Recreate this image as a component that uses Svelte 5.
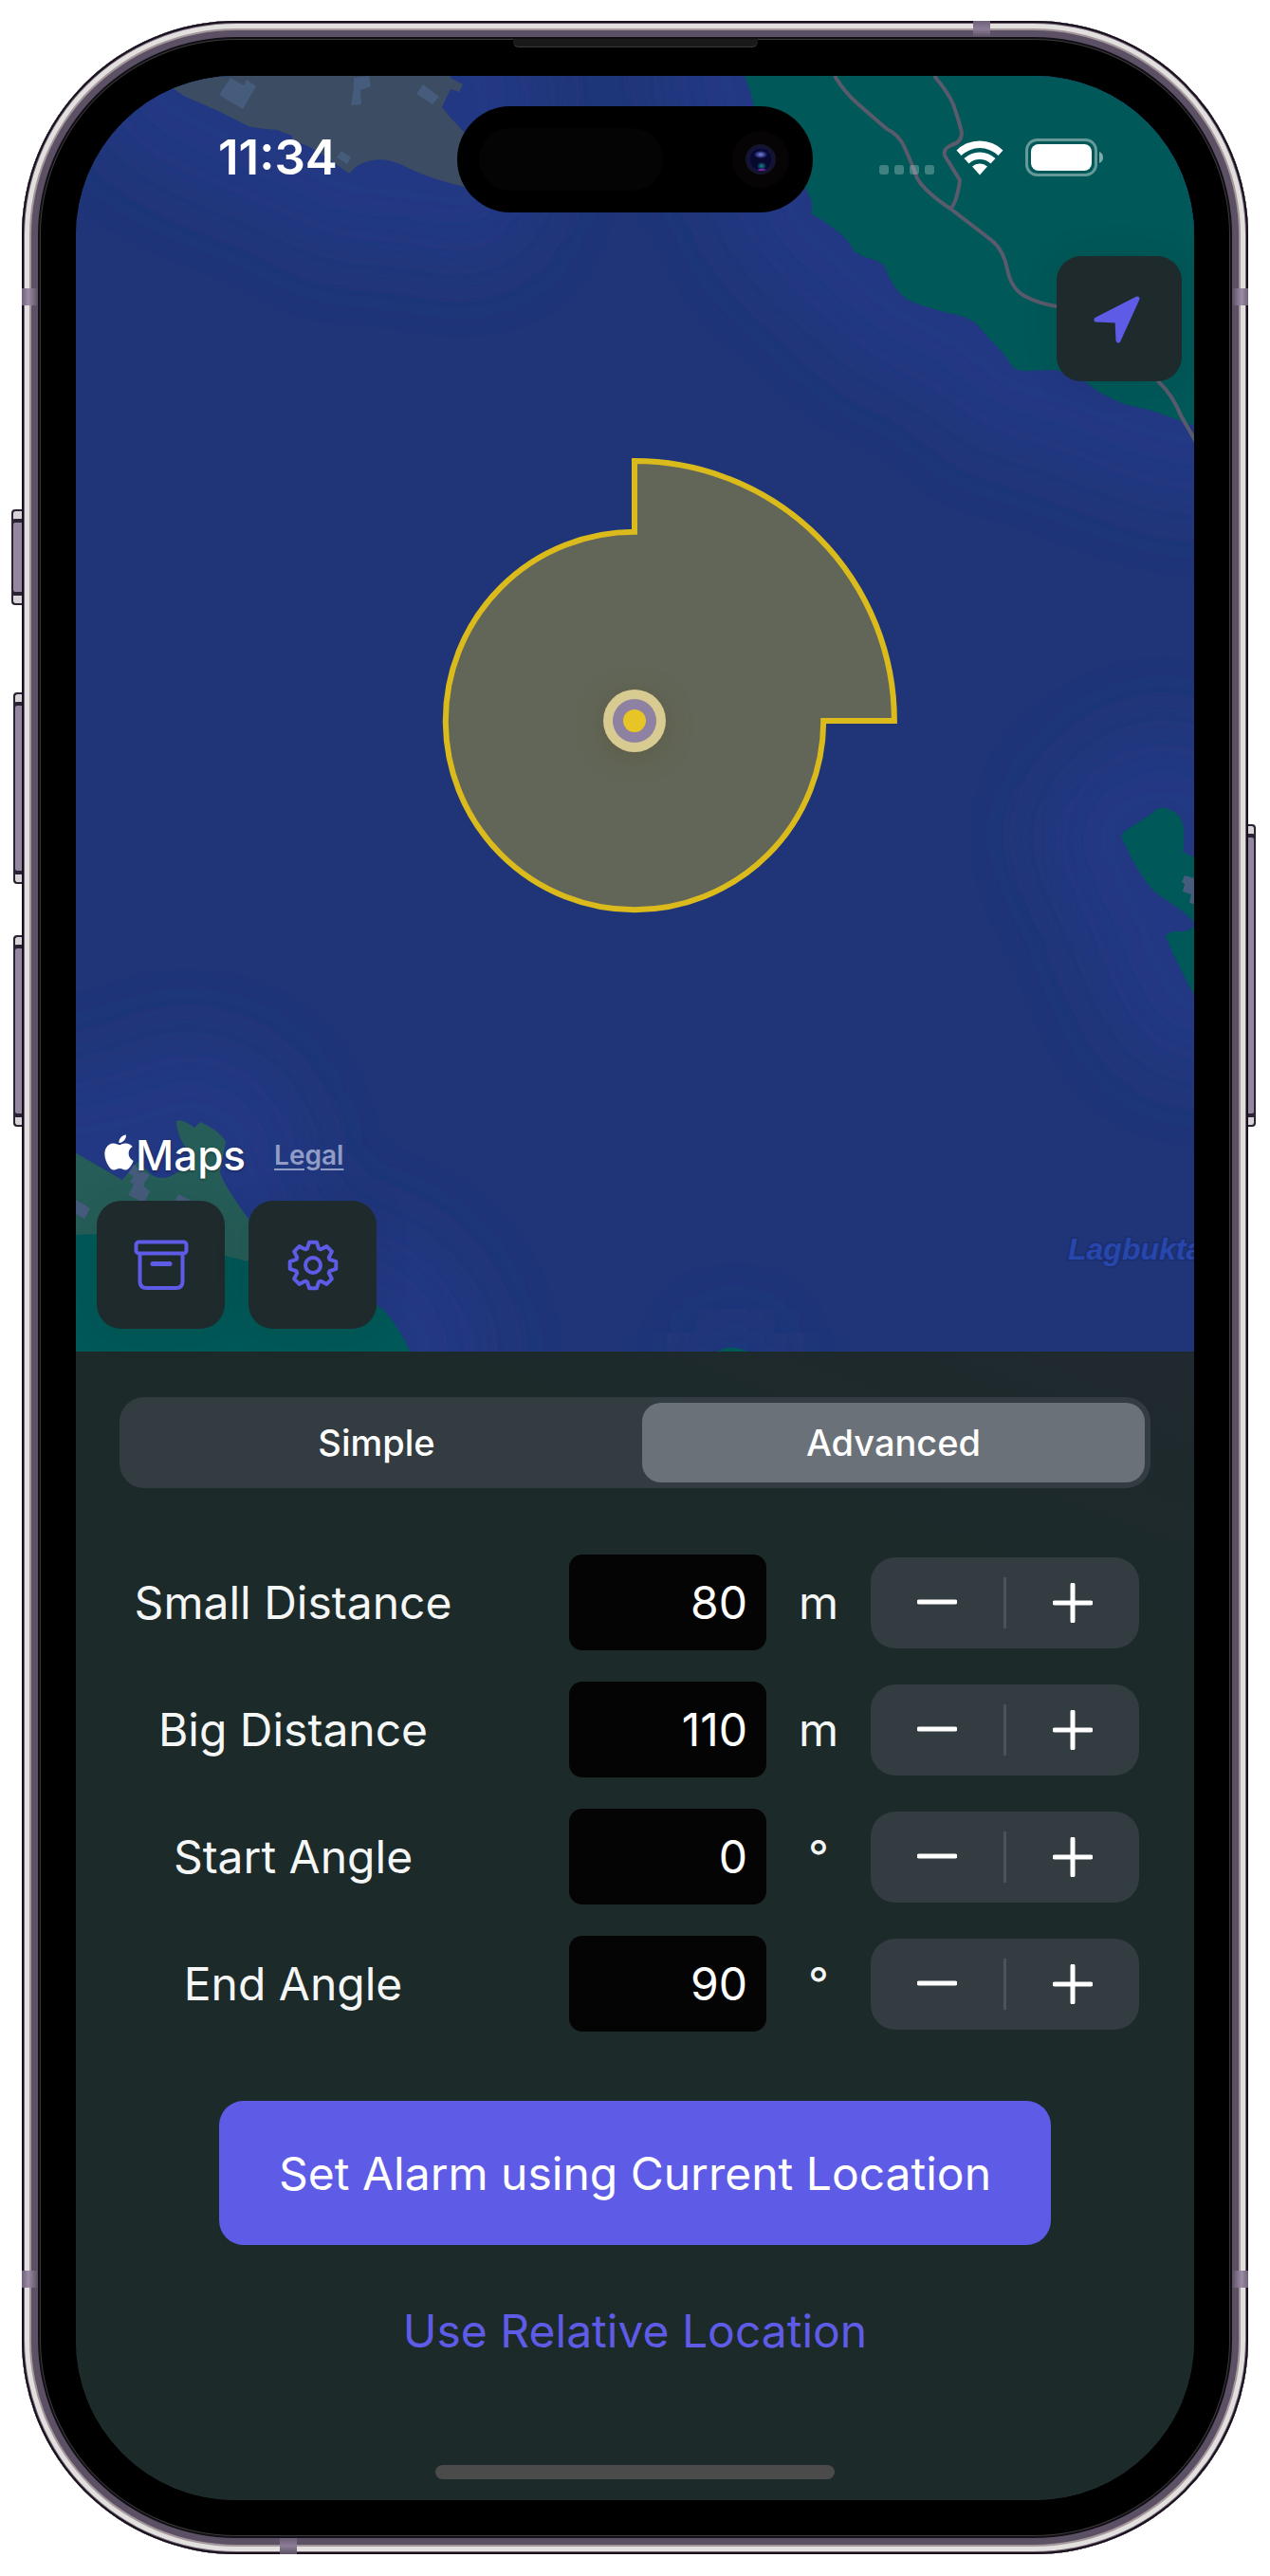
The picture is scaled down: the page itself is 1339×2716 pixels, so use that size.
<script>
  let mode = $state('Advanced');
  let rows = $state([
    { id: 'small', label: 'Small Distance', value: 80, unit: 'm', step: 10 },
    { id: 'big', label: 'Big Distance', value: 110, unit: 'm', step: 10 },
    { id: 'start', label: 'Start Angle', value: 0, unit: '°', step: 5 },
    { id: 'end', label: 'End Angle', value: 90, unit: '°', step: 5 }
  ]);

  // Anchor position on the map and the scale in map units per metre.
  const cx = 669;
  const cy = 760;
  const scale = 2.49;

  function point(radius, degrees) {
    const a = (degrees * Math.PI) / 180;
    return `${(cx + radius * Math.sin(a)).toFixed(1)} ${(cy - radius * Math.cos(a)).toFixed(1)}`;
  }

  // Outer arc from the start to the end angle, then the inner arc back round.
  let zone = $derived.by(() => {
    const small = Number(rows[0].value) * scale;
    const big = Number(rows[1].value) * scale;
    const start = Number(rows[2].value);
    const end = Number(rows[3].value);
    const large = end - start > 180 ? 1 : 0;
    return (
      `M${point(big, start)} A${big} ${big} 0 ${large} 1 ${point(big, end)} ` +
      `L${point(small, end)} A${small} ${small} 0 ${1 - large} 1 ${point(small, start)} Z`
    );
  });

  const gear = Array.from({ length: 8 }, (_, i) =>
    [[-19, 18.6], [-9, 24.6], [9, 24.6], [19, 18.6]]
      .map(([d, r]) => {
        const a = ((i * 45 + d) * Math.PI) / 180;
        return `${(28 + r * Math.sin(a)).toFixed(2)} ${(28 - r * Math.cos(a)).toFixed(2)}`;
      })
      .join('L')
  ).join('L');

  const greyLand =
    'M170 70L184 94Q192 101 205 106L232 118L262 133Q268 135 292 137L308 143V148L325 154L345 166L368 183L375 176Q400 160 430 177Q455 189 490 197V140L475 124L466 113L475 94L484 97L488 89L475 82V70Z';
  const eastLand =
    'M781 70L790 93L797 120L850 200Q858 212 856 226Q872 234 890 250Q897 257 901 266L912 271Q928 275 933 281Q940 303 955 315Q968 322 1000 330Q1022 334 1030 342Q1040 354 1058 373L1068 387Q1072 391 1080 391L1114 390L1145 402Q1154 413 1185 426L1215 433L1259 449H1270V70Z';
  const island =
    'M1182 881Q1183 878 1188 875L1215 857Q1222 849 1232 853Q1245 858 1247 868Q1250 882 1247 898L1270 909V1050L1259 1048Q1254 1043 1230 990Q1227 984 1238 982Q1259 983 1259 974Q1256 965 1222 944Q1202 928 1182 881Z';
  const suburb =
    'M70 1210L129 1244L145 1225L155 1234Q165 1246 180 1240L205 1226Q185 1196 186 1182Q192 1179 205 1189L211 1183Q232 1192 238 1204L232 1236Q236 1250 262 1285L275 1310V1345H70Z';
  const southLand = 'M70 1303Q102 1299 150 1304L262 1330L397 1376Q412 1383 433 1426H70Z';
</script>

{#snippet band(place)}
  <span class="band {place}"></span>
{/snippet}

<div class="page">
  <div class="device">
    {#each ['key action', 'key up', 'key down', 'key power'] as k}
      <span class={k}></span>
    {/each}
    {@render band('lt')}
    {@render band('lb')}
    {@render band('rt')}
    {@render band('rb')}
    {@render band('tp')}
    {@render band('bt')}
    <span class="speaker"></span>

    <main class="screen">
      <section class="map" aria-label="Map">
        <svg class="canvas" viewBox="80 80 1179 1345" preserveAspectRatio="xMidYMid slice" aria-hidden="true">
          <defs>
            <filter id="soft" filterUnits="userSpaceOnUse" x="-100" y="-100" width="1600" height="1800">
              <feGaussianBlur stdDeviation="38" />
            </filter>
          </defs>
          <rect x="70" y="70" width="1200" height="1366" fill="#1f3578" />
          <g filter="url(#soft)" fill="#213883" stroke="#213883" stroke-width="170" stroke-linejoin="round">
            <path d={greyLand} />
            <path d={eastLand} />
            <path d={island} />
            <path d={suburb} />
            <path d={southLand} />
            <path d="M745 1450h60" stroke-width="90" />
          </g>
          <path d={greyLand} fill="#3c4c62" />
          <path d={eastLand} fill="#005858" />
          <path d={island} fill="#005858" />
          <path d={suburb} fill="#265d58" />
          <path d={southLand} fill="#005858" />
          <path d="M755 1426Q765 1418 780 1422L792 1426Z" fill="#005858" />
          <g fill="#465c7c">
            <path d="M243 82L257 90L260 84L270 91L256 115L231 100Z" />
            <path d="M373 82L389 80L391 91L380 95L381 110L370 111L373 92Z" />
            <path d="M446 89L463 102L456 110L439 99Z" />
            <path d="M360 159L370 166L366 173L355 166Z" />
            <path d="M1249 923L1262 927V954L1254 952L1256 943L1247 940L1249 932L1246 930Z" />
            <path d="M141 1228L158 1239L152 1247V1251L158 1256L152 1268L135 1260L141 1249L137 1246L141 1240L135 1237Z" />
            <path d="M80 1265L95 1274L89 1285L80 1280Z" />
            <path d="M188 1259L200 1265L196 1272L184 1267Z" />
          </g>
          <g fill="none" stroke="#595b6c" stroke-width="4">
            <path d="M880 80Q890 97 905 110L935 136Q948 142 954 156Q962 174 967 188Q975 202 1002 220L1045 253Q1058 263 1062 284Q1066 304 1080 312Q1095 320 1114 323L1180 350L1222 403Q1236 416 1245 438L1261 466" />
            <path d="M985 80Q1000 98 1005 110Q1012 130 1014 140Q1014 150 1003 153Q994 157 996 164L1012 190Q1009 212 1003 219" />
          </g>
          <text class="water" x="1126" y="1328">Lagbukta</text>
          <path d={zone} fill="#626658" stroke="#dbbb1c" stroke-width="6" />
          <circle class="pin" {cx} {cy} r="33" fill="#d8cb92" />
          <circle {cx} {cy} r="23" fill="#8f81a2" />
          <circle {cx} {cy} r="12" fill="#e8c527" />
        </svg>

        <div class="overlay">
          <header class="status">
            <time>11:34</time>
            <div class="notch" aria-hidden="true">
              <span class="sensor"></span>
              <svg class="lens" viewBox="0 0 60 60">
                <defs>
                  <radialGradient id="top">
                    <stop offset="0" stop-color="#7b86e0" />
                    <stop offset="1" stop-color="#0a0a48" />
                  </radialGradient>
                  <radialGradient id="low">
                    <stop offset="0" stop-color="#128a86" />
                    <stop offset="1" stop-color="#0a0a38" />
                  </radialGradient>
                </defs>
                <circle cx="30" cy="30" r="30" fill="#070406" />
                <circle cx="30" cy="30" r="16" fill="#14152c" />
                <circle cx="30" cy="30" r="12" fill="#08082c" stroke="#10145c" />
                <ellipse cx="30" cy="25" rx="7" ry="4" fill="url(#top)" />
                <ellipse cx="31" cy="37" rx="5" ry="4" fill="url(#low)" />
                <ellipse cx="31" cy="41" rx="4" ry="1" fill="#7a22a0" />
              </svg>
            </div>
            <div class="signals">
              <svg class="dots" viewBox="0 0 58 10" aria-hidden="true">
                {#each [0, 16, 32, 48] as x}
                  <rect {x} y="0" width="10" height="10" rx="3" />
                {/each}
              </svg>
              <svg class="wifi" viewBox="0 0 52 38" aria-hidden="true">
                <path d="M1.500 11.500A35 35 0 0 1 50.500 11.500L45.500 17A28 28 0 0 0 6.500 17Z" />
                <path d="M9.500 20A24 24 0 0 1 42.500 20L37.500 25.500A17 17 0 0 0 14.500 25.500Z" />
                <path d="M18 28.500A12 12 0 0 1 34 28.500L26 37.500Z" />
              </svg>
              <svg class="battery" viewBox="0 0 83 40" aria-hidden="true">
                <rect x="1.500" y="1.500" width="73" height="37" rx="11" fill="none" stroke="#fff" stroke-opacity=".4" stroke-width="3" />
                <rect x="6" y="6" width="64" height="28" rx="8" />
                <path d="M78 14q4 1.500 4 6t-4 6z" fill-opacity=".5" />
              </svg>
            </div>
          </header>

          <button class="tool locate" aria-label="Go to my location">
            <svg viewBox="0 0 56 56" width="56" height="56" aria-hidden="true">
              <path d="M4 29L47 7L27 51L26 30Z" fill="#5e5ce6" stroke="#5e5ce6" stroke-width="5" stroke-linejoin="round" />
            </svg>
          </button>

          <div class="foot">
            <div class="credit">
              <span class="brand">
                <svg viewBox="2 0 20 24" width="31" height="38" aria-hidden="true">
                  <path fill="#fff" d="M12.152 6.896c-.948 0-2.415-1.078-3.960-1.040-2.040.027-3.910 1.183-4.961 3.014-2.117 3.675-.546 9.103 1.519 12.090 1.013 1.454 2.208 3.090 3.792 3.039 1.520-.065 2.090-.987 3.935-.987 1.831 0 2.350.987 3.960.948 1.637-.026 2.676-1.480 3.676-2.948 1.156-1.688 1.636-3.325 1.662-3.415-.039-.013-3.182-1.221-3.220-4.857-.026-3.040 2.480-4.494 2.597-4.559-1.429-2.090-3.623-2.324-4.390-2.376-2-.156-3.675 1.090-4.610 1.090zM15.530 3.830c.843-1.012 1.400-2.427 1.245-3.830-1.207.052-2.662.805-3.532 1.818-.780.896-1.454 2.338-1.273 3.714 1.338.104 2.715-.688 3.559-1.701" />
                </svg>
                Maps
              </span>
              <a href="#legal">Legal</a>
            </div>
            <div class="tools">
              <button class="tool" aria-label="Archive">
                <svg viewBox="0 0 58 54" width="58" height="54" fill="none" stroke="#5e5ce6" stroke-width="4" stroke-linecap="round" aria-hidden="true">
                  <rect x="2.500" y="2.500" width="53" height="12" rx="3" />
                  <path d="M6.500 15V44q0 7 7 7H44.500q7 0 7-7V15" />
                  <path d="M20 25.500H38" stroke-width="5" />
                </svg>
              </button>
              <button class="tool" aria-label="Settings">
                <svg viewBox="0 0 56 56" width="56" height="56" fill="none" stroke="#5e5ce6" stroke-width="4" stroke-linejoin="round" aria-hidden="true">
                  <path d={`M${gear}Z`} />
                  <circle cx="28" cy="28" r="8" />
                </svg>
              </button>
            </div>
          </div>
        </div>
      </section>

      <section class="panel">
        <div class="segments" role="group" aria-label="Mode">
          {#each ['Simple', 'Advanced'] as name}
            <button class:active={mode === name} aria-pressed={mode === name} onclick={() => (mode = name)}>{name}</button>
          {/each}
        </div>

        <div class="fields">
          {#each rows as row (row.id)}
            <div class="field">
              <label for={row.id}>{row.label}</label>
              <input id={row.id} type="text" inputmode="numeric" bind:value={row.value} />
              <span class="unit">{row.unit}</span>
              <div class="stepper">
                <button aria-label="Decrease {row.label}" onclick={() => (row.value = Number(row.value) - row.step)}>
                  <svg viewBox="0 0 42 42" width="42" height="42" aria-hidden="true"><path d="M2 20H40" /></svg>
                </button>
                <span class="rule"></span>
                <button aria-label="Increase {row.label}" onclick={() => (row.value = Number(row.value) + row.step)}>
                  <svg viewBox="0 0 42 42" width="42" height="42" aria-hidden="true"><path d="M2 21H40M21 2V40" /></svg>
                </button>
              </div>
            </div>
          {/each}
        </div>

        <button class="primary">Set Alarm using Current Location</button>
        <button class="plain">Use Relative Location</button>
        <span class="home"></span>
      </section>
    </main>
  </div>
</div>

<style>
  :global(body) {
    background: #fff;
  }
  .page {
    padding: 22px 23px 23px;
    font-family: Inter, 'Liberation Sans', sans-serif;
    color: #fff;
  }
  button,
  input {
    font: inherit;
    color: inherit;
    border: 0;
    margin: 0;
    padding: 0;
    background: none;
  }
  svg {
    display: block;
    flex: none;
  }

  .device {
    position: relative;
    padding: 58px 57px 57px;
    border-radius: 226px;
    background: #000;
    box-shadow:
      inset 0 0 0 2px #17101c,
      inset 0 0 0 3px #6f6070,
      inset 0 0 0 8px #e2e0df,
      inset 0 0 0 10px #a4979c,
      inset 0 0 0 17px #5b5064,
      inset 0 0 0 19px #120e16,
      inset 0 0 0 20px #3a3a39;
  }
  .key {
    position: absolute;
    box-sizing: border-box;
    border: 2px solid #2a2333;
    background: #93879f;
    box-shadow: inset 0 10px 0 -2px #d9d3d8, inset 0 -10px 0 -2px #d9d3d8, inset 0 12px 0 #2a2333, inset 0 -12px 0 #2a2333;
  }
  .action,
  .up,
  .down {
    right: 100%;
    border-right: 0;
    border-radius: 4px 0 0 4px;
    width: 9px;
  }
  .action {
    top: 515px;
    height: 101px;
    width: 11px;
  }
  .up {
    top: 708px;
    height: 202px;
  }
  .down {
    top: 964px;
    height: 202px;
  }
  .power {
    left: 100%;
    top: 847px;
    width: 8px;
    height: 319px;
    border-left: 0;
    border-radius: 0 4px 4px 0;
  }
  .band {
    position: absolute;
    width: 17px;
    height: 18px;
  }
  .lt,
  .lb {
    left: 0;
    background: linear-gradient(90deg, #6f6079, #9c8da5 40%, #5b5064);
  }
  .rt,
  .rb {
    right: 0;
    background: linear-gradient(270deg, #6f6079, #9c8da5 40%, #5b5064);
  }
  .lt,
  .rt {
    top: 282px;
  }
  .lb,
  .rb {
    bottom: 281px;
  }
  .tp {
    top: 0;
    right: 272px;
  }
  .bt {
    bottom: 0;
    left: 272px;
  }
  .tp,
  .bt {
    width: 18px;
    height: 17px;
    background: linear-gradient(#6f6079, #8c7d96, #5b5064);
  }
  .speaker {
    position: absolute;
    top: 19px;
    left: 50%;
    width: 258px;
    height: 9px;
    margin-left: -129px;
    border-radius: 0 0 6px 6px;
    background: #191919;
    border-bottom: 1px solid #3a3a39;
    box-sizing: border-box;
  }

  .screen {
    border-radius: 168px;
    overflow: hidden;
    background: #1c2a2a;
  }
  .map {
    display: grid;
  }
  .canvas,
  .overlay {
    grid-area: 1 / 1;
  }
  .canvas {
    width: 100%;
    height: 100%;
    aspect-ratio: 1179 / 1345;
  }
  .water {
    font-family: 'Liberation Sans', sans-serif;
    font-size: 32px;
    font-weight: 700;
    font-style: italic;
    fill: #2747ac;
    stroke: #1c2f70;
    stroke-width: 4px;
    paint-order: stroke;
  }
  .pin {
    filter: drop-shadow(0 4px 14px rgba(80, 70, 20, 0.3));
  }
  .overlay {
    position: relative;
    display: flex;
    flex-direction: column;
  }
  .status {
    display: grid;
    grid-template-columns: 1fr 375px 1fr;
    align-items: center;
    padding-top: 32px;
  }
  time {
    padding-left: 150px;
    padding-bottom: 4px;
    font-size: 51px;
    line-height: 56px;
    font-weight: 600;
  }
  .notch {
    display: flex;
    align-items: center;
    justify-content: space-between;
    box-sizing: border-box;
    height: 112px;
    padding: 0 25px 0 23px;
    border-radius: 56px;
    background: #000;
  }
  .sensor {
    width: 194px;
    height: 66px;
    border-radius: 33px;
    background: #040404;
  }
  .lens {
    width: 60px;
    height: 60px;
  }
  .signals {
    display: flex;
    align-items: center;
    gap: 22px;
    padding: 0 0 4px 70px;
    fill: #fff;
  }
  .dots {
    width: 58px;
    height: 10px;
    margin-top: 26px;
    fill-opacity: 0.25;
  }
  .wifi {
    width: 52px;
    height: 38px;
  }
  .battery {
    width: 83px;
    height: 40px;
  }

  .tool {
    display: grid;
    place-items: center;
    width: 135px;
    height: 135px;
    border-radius: 26px;
    background: #1e2a2c;
    box-shadow: 0 0 40px rgba(0, 0, 0, 0.08);
  }
  .locate {
    width: 132px;
    height: 132px;
    margin: 46px 13px 0 auto;
  }
  .foot {
    margin-top: auto;
    padding: 0 22px 24px;
  }
  .credit {
    display: flex;
    align-items: center;
    gap: 30px;
    padding-left: 8px;
    margin-bottom: 16px;
  }
  .brand {
    display: flex;
    align-items: center;
    gap: 2px;
    font-size: 44px;
    line-height: 64px;
    font-weight: 500;
    text-shadow: 0 1px 3px rgba(0, 0, 0, 0.4);
  }
  .brand svg {
    margin-bottom: 6px;
  }
  .credit a {
    font-size: 28px;
    font-weight: 600;
    color: #929dc6;
    text-underline-offset: 4px;
  }
  .tools {
    display: flex;
    gap: 25px;
  }

  .panel {
    display: flex;
    flex-direction: column;
    padding: 48px 46px 22px;
    background: linear-gradient(200deg, #20292f 0, #1c2a2a 20%);
  }
  .segments {
    display: grid;
    grid-template-columns: 1fr 1fr;
    gap: 15px;
    height: 96px;
    box-sizing: border-box;
    padding: 6px;
    border-radius: 26px;
    background: #333c41;
    font-size: 38px;
    font-weight: 500;
  }
  .segments button {
    border-radius: 20px;
  }
  .segments .active {
    background: #6b7178;
  }
  .fields {
    display: flex;
    flex-direction: column;
    gap: 33px;
    margin: 70px 12px 73px;
    font-size: 48px;
  }
  .field {
    display: grid;
    grid-template-columns: 342px 1fr 208px 110px 283px;
    align-items: center;
    color: #f5f6f6;
  }
  .field label {
    text-align: center;
    white-space: nowrap;
  }
  .field input {
    grid-column: 3;
    width: 100%;
    height: 101px;
    box-sizing: border-box;
    padding: 0 20px;
    border-radius: 14px;
    background: #040404;
    color: #fff;
    text-align: right;
  }
  .unit {
    text-align: center;
  }
  .stepper {
    display: flex;
    align-items: center;
    height: 96px;
    border-radius: 26px;
    background: #333c41;
  }
  .stepper button {
    display: grid;
    flex: 1;
    height: 100%;
    place-items: center;
  }
  .stepper path {
    stroke: #fff;
    stroke-width: 5;
    stroke-linecap: round;
  }
  .rule {
    width: 3px;
    height: 54px;
    background: #4b5358;
  }
  .primary {
    align-self: center;
    height: 152px;
    padding: 0 63px;
    border-radius: 26px;
    background: #5e5ce6;
    font-size: 48px;
  }
  .plain {
    align-self: center;
    height: 100px;
    margin: 40px 0 92px;
    font-size: 48px;
    color: #5e5ce6;
  }
  .home {
    align-self: center;
    width: 421px;
    height: 15px;
    border-radius: 8px;
    background: #4b4b4b;
  }
</style>
